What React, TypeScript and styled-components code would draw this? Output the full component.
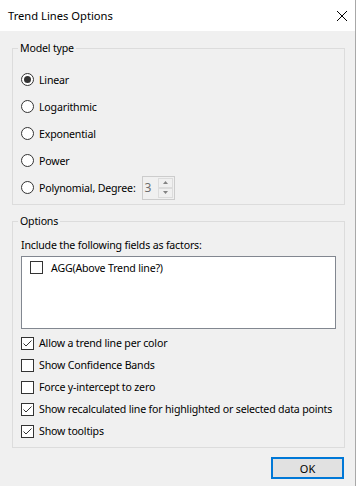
import styled, { createGlobalStyle } from 'styled-components'

const GlobalStyle = createGlobalStyle`
  html, body {
    margin: 0;
    padding: 0;
    background: #ffffff;
  }
  body {
    font-family: "Noto Sans", "Segoe UI", sans-serif;
    font-size: 10.6px;
    letter-spacing: -0.18px;
    color: #000000;
  }
`

const Window = styled.div`
  width: 355px;
  height: 486px;
  border-right: 1px solid #a8a8a8;
  background: #f0f0f0;
  display: flex;
  flex-direction: column;
`

const TitleBar = styled.div`
  height: 31px;
  flex: none;
  background: #ffffff;
  display: flex;
  align-items: center;
  justify-content: space-between;
  padding: 0 8px 0 8px;
`

const Title = styled.div`
  font-size: 11.2px;
  letter-spacing: 0;
  line-height: 16px;
`

const CloseButton = styled.div`
  width: 10px;
  height: 10px;
  display: flex;
`

const Body = styled.div`
  padding: 9px 10px 0 12px;
  display: flex;
  flex-direction: column;
  gap: 8px;
`

const Group = styled.fieldset<{ $top?: number; $bottom?: number }>`
  margin: 0;
  min-width: 0;
  border: 1px solid #dcdcdc;
  padding: ${p => p.$top ?? 8}px 8px ${p => p.$bottom ?? 5}px 8px;
  display: flex;
  flex-direction: column;
`

const GroupLabel = styled.legend`
  padding: 0 2px;
  margin-left: -3px;
  line-height: 16px;
`

const RadioRow = styled.label`
  height: 27px;
  display: flex;
  align-items: center;
  gap: 5px;
  white-space: nowrap;
`

const RadioCircle = styled.span<{ $checked?: boolean }>`
  width: 13px;
  height: 13px;
  box-sizing: border-box;
  border: 1px solid #333333;
  border-radius: 50%;
  background: #ffffff;
  display: flex;
  align-items: center;
  justify-content: center;
  flex: none;

  &::after {
    content: '';
    display: ${p => (p.$checked ? 'block' : 'none')};
    width: 7px;
    height: 7px;
    border-radius: 50%;
    background: #333333;
  }
`

const SpinBox = styled.div`
  margin-left: 1px;
  width: 33px;
  height: 24px;
  box-sizing: border-box;
  border: 1px solid #cccccc;
  display: flex;
  padding: 1px 1px 1px 2px;
  gap: 2px;
`

const SpinValue = styled.span`
  flex: 1;
  color: #6d6d6d;
  display: flex;
  align-items: center;
  font-size: 12px;
`

const SpinButtons = styled.div`
  width: 15px;
  display: flex;
  flex-direction: column;
`

const SpinButton = styled.div`
  height: 10px;
  box-sizing: border-box;
  border: 1px solid #dcdcdc;
  display: flex;
  align-items: center;
  justify-content: center;
`

const Caption = styled.div`
  line-height: 16px;
`

const ListBox = styled.div`
  margin-top: 3px;
  width: 315px;
  height: 73px;
  box-sizing: border-box;
  border: 1px solid #828790;
  background: #ffffff;
  padding: 4px 0 0 8px;
`

const ListItem = styled.label`
  display: flex;
  align-items: center;
  gap: 8px;
  height: 13px;
  white-space: nowrap;
`

const CheckRow = styled.label`
  height: 22px;
  display: flex;
  align-items: center;
  gap: 5px;
  white-space: nowrap;
`

const CheckBox = styled.span`
  width: 13px;
  height: 13px;
  box-sizing: border-box;
  border: 1px solid #333333;
  background: #ffffff;
  display: flex;
  flex: none;
`

const Rows = styled.div`
  margin-top: 3px;
  display: flex;
  flex-direction: column;
`

const Footer = styled.div`
  display: flex;
  justify-content: flex-end;
  padding-top: 1px;
  padding-right: 1px;
`

const OkButton = styled.button`
  width: 73px;
  height: 22px;
  box-sizing: border-box;
  border: 2px solid #0078d7;
  background: #e1e1e1;
  font-family: inherit;
  font-size: 11px;
  color: #000000;
  padding: 0;
`

function Check({ checked }: { checked?: boolean }) {
  return (
    <CheckBox>
      {checked && (
        <svg width="11" height="11" viewBox="0 0 11 11">
          <path d="M1.5 5.5 L4 8 L9.5 2.5" fill="none" stroke="#333" strokeWidth="1" />
        </svg>
      )}
    </CheckBox>
  )
}

const models = ['Linear', 'Logarithmic', 'Exponential', 'Power']

const options = [
  { label: 'Allow a trend line per color', checked: true },
  { label: 'Show Confidence Bands', checked: false },
  { label: 'Force y-intercept to zero', checked: false },
  { label: 'Show recalculated line for highlighted or selected data points', checked: true },
  { label: 'Show tooltips', checked: true },
]

export default function App() {
  return (
    <Window>
      <GlobalStyle />
      <TitleBar>
        <Title>Trend Lines Options</Title>
        <CloseButton>
          <svg width="10" height="10" viewBox="0 0 10 10">
            <path d="M0 0 L10 10 M10 0 L0 10" stroke="#000" strokeWidth="1" />
          </svg>
        </CloseButton>
      </TitleBar>
      <Body>
        <Group $top={10} $bottom={3}>
          <GroupLabel>Model type</GroupLabel>
          {models.map((m, i) => (
            <RadioRow key={m}>
              <RadioCircle $checked={i === 0} />
              {m}
            </RadioRow>
          ))}
          <RadioRow>
            <RadioCircle />
            Polynomial, Degree:
            <SpinBox>
              <SpinValue>3</SpinValue>
              <SpinButtons>
                <SpinButton>
                  <svg width="5" height="3" viewBox="0 0 5 3">
                    <path d="M0 3 L2.5 0 L5 3 Z" fill="#838383" />
                  </svg>
                </SpinButton>
                <SpinButton>
                  <svg width="5" height="3" viewBox="0 0 5 3">
                    <path d="M0 0 L5 0 L2.5 3 Z" fill="#838383" />
                  </svg>
                </SpinButton>
              </SpinButtons>
            </SpinBox>
          </RadioRow>
        </Group>
        <Group>
          <GroupLabel>Options</GroupLabel>
          <Caption>Include the following fields as factors:</Caption>
          <ListBox>
            <ListItem>
              <Check />
              AGG(Above Trend line?)
            </ListItem>
          </ListBox>
          <Rows>
            {options.map(o => (
              <CheckRow key={o.label}>
                <Check checked={o.checked} />
                {o.label}
              </CheckRow>
            ))}
          </Rows>
        </Group>
        <Footer>
          <OkButton>OK</OkButton>
        </Footer>
      </Body>
    </Window>
  )
}
